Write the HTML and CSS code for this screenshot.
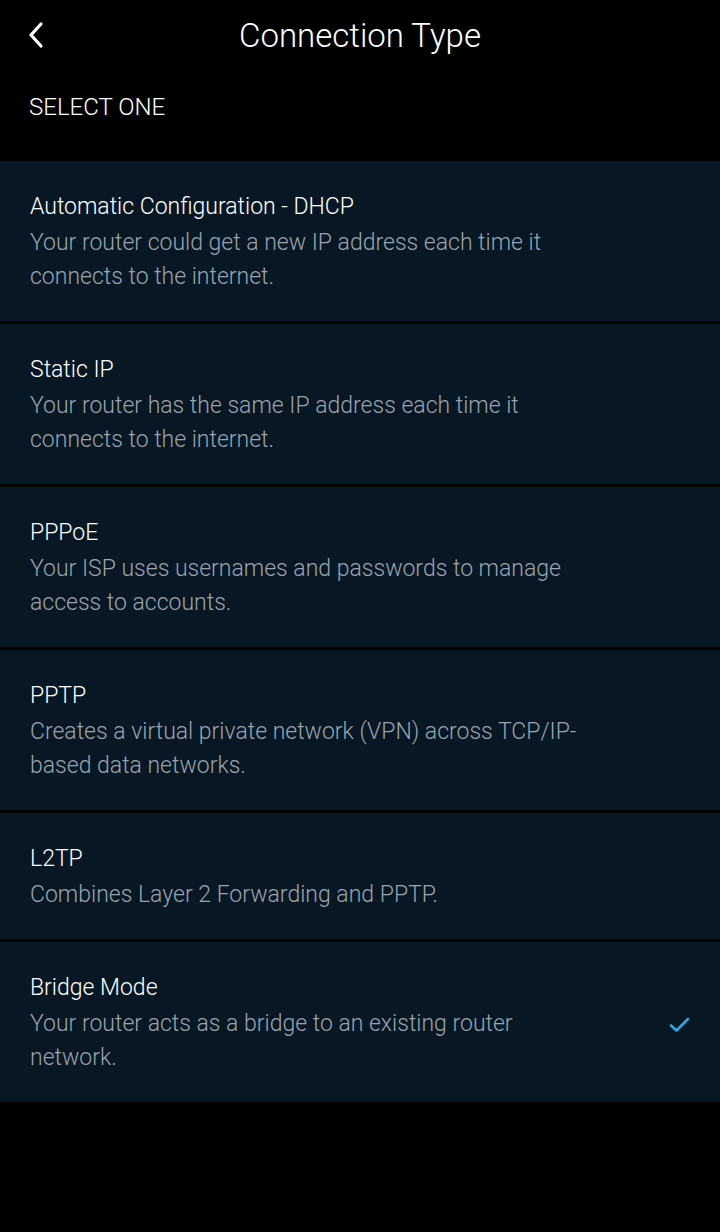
FILE: index.html
```html
<!DOCTYPE html>
<html lang="en">
<head>
<meta charset="utf-8">
<title>Connection Type</title>
<link rel="stylesheet" href="styles.css">
</head>
<body>
<div class="screen">
  <header class="topbar">
    <button class="back" aria-label="Back">
      <svg width="20" height="28" viewBox="0 0 20 28"><path d="M15 3 L5 14 L15 25" fill="none" stroke="#ffffff" stroke-width="3.2" stroke-linecap="round" stroke-linejoin="round"/></svg>
    </button>
    <h1 class="title">Connection Type</h1>
  </header>
  <div class="section-label">SELECT ONE</div>
  <ul class="options">
    <li class="option">
      <div class="text">
        <div class="opt-title">Automatic Configuration - DHCP</div>
        <div class="opt-desc">Your router could get a new IP address each time it connects to the internet.</div>
      </div>
    </li>
    <li class="option">
      <div class="text">
        <div class="opt-title">Static IP</div>
        <div class="opt-desc">Your router has the same IP address each time it connects to the internet.</div>
      </div>
    </li>
    <li class="option">
      <div class="text">
        <div class="opt-title">PPPoE</div>
        <div class="opt-desc">Your ISP uses usernames and passwords to manage access to accounts.</div>
      </div>
    </li>
    <li class="option">
      <div class="text">
        <div class="opt-title">PPTP</div>
        <div class="opt-desc">Creates a virtual private network (VPN) across TCP/IP-based data networks.</div>
      </div>
    </li>
    <li class="option">
      <div class="text">
        <div class="opt-title">L2TP</div>
        <div class="opt-desc">Combines Layer 2 Forwarding and PPTP.</div>
      </div>
    </li>
    <li class="option selected">
      <div class="text">
        <div class="opt-title">Bridge Mode</div>
        <div class="opt-desc">Your router acts as a bridge to an existing router network.</div>
      </div>
      <svg class="check" width="24" height="20" viewBox="0 0 24 20"><path d="M3 10.5 L8.5 15.5 L20 4" fill="none" stroke="#2fa8e2" stroke-width="2.6" stroke-linecap="round" stroke-linejoin="round"/></svg>
    </li>
  </ul>
</div>
</body>
</html>
```
FILE: styles.css
```css
html, body {
  margin: 0;
  padding: 0;
  background: #000000;
}
body {
  font-family: Roboto, "Liberation Sans", sans-serif;
  color: #ffffff;
}
.screen {
  width: 720px;
  min-height: 1232px;
  background: #000000;
}
.topbar {
  position: relative;
  height: 72px;
  display: flex;
  align-items: center;
  justify-content: center;
}
.back {
  position: absolute;
  left: 24px;
  top: 19px;
  width: 24px;
  height: 32px;
  padding: 0;
  border: none;
  background: none;
  display: flex;
  align-items: center;
  justify-content: center;
}
.title {
  margin: 0;
  font-size: 33px;
  font-weight: 300;
  line-height: 72px;
  letter-spacing: 0;
}
.section-label {
  padding: 18px 30px 0 29px;
  font-size: 24px;
  font-weight: 300;
  line-height: 34px;
  height: 34px;
  margin-bottom: 37px;
}
.options {
  list-style: none;
  margin: 0;
  padding: 0;
  display: flex;
  flex-direction: column;
  gap: 3px;
}
.option {
  background: #071724;
  padding: 29px 28px 27px 30px;
  display: flex;
  align-items: flex-start;
  justify-content: space-between;
}
.text {
  width: 565px;
}
.opt-title {
  font-size: 23px;
  line-height: 34px;
  margin-bottom: 2px;
  color: #ffffff;
  font-weight: 300;
}
.opt-desc {
  font-size: 23px;
  line-height: 34px;
  color: #9aa4ae;
  font-weight: 300;
}
.check {
  margin-top: 44px;
}
```
